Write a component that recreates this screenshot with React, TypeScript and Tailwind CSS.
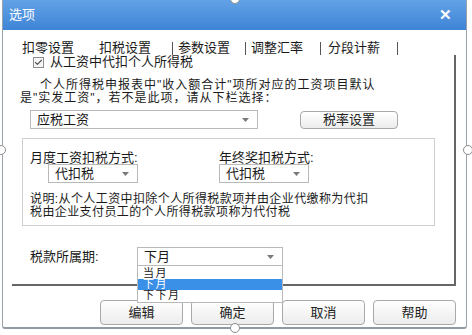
import { Check } from 'lucide-react';

const tabs = ['扣零设置', '扣税设置', '参数设置', '调整汇率', '分段计薪'];

function Arrow() {
  return (
    <svg width="7" height="4" viewBox="0 0 7 4" className="shrink-0">
      <path d="M0 0 L7 0 L3.5 4 Z" fill="#7a7a7a" />
    </svg>
  );
}

function Select({ value, className }: { value: string; className: string }) {
  return (
    <div
      className={`flex items-center justify-between border border-[#b9b9b9] bg-white pl-[6px] pr-[8px] ${className}`}
    >
      <span className="leading-[14px]">{value}</span>
      <Arrow />
    </div>
  );
}

function Button({ label, className = '' }: { label: string; className?: string }) {
  return (
    <button
      type="button"
      className={`flex items-center justify-center rounded-[4px] border border-[#a9a9a9] bg-gradient-to-b from-white to-[#ececec] text-[13px] leading-[14px] text-[#222] ${className}`}
    >
      {label}
    </button>
  );
}

function Handle({ className }: { className: string }) {
  return (
    <div className={`absolute h-[10px] w-[10px] rounded-full border border-[#8c8c8c] bg-white ${className}`} />
  );
}

export default function App() {
  return (
    <div className="relative h-[335px] w-[472px] overflow-hidden bg-white pl-[2px] font-['Liberation_Sans','Noto_Sans_CJK_SC',sans-serif] text-[13px] text-[#1a1a1a]">
      <div className="flex h-[329px] w-[465px] flex-col rounded-b-[3px] border-x border-b-2 border-x-[#9aa3ad] border-b-[#8f9aa5]">
        {/* title bar */}
        <div className="flex h-[30px] shrink-0 items-center justify-between bg-gradient-to-b from-[#62a2e6] to-[#3e84d6] pl-[6px] pr-[14px] text-white">
          <span className="leading-[14px]">选项</span>
          <span className="text-[15px] font-bold leading-[14px]">✕</span>
        </div>

        {/* tabs */}
        <div className="mt-[11px] flex h-[14px] items-center pl-[19px] leading-[14px]">
          <span>{tabs[0]}</span>
          <span className="ml-[25px]">{tabs[1]}</span>
          <span className="ml-[21px] h-[13px] w-px bg-[#555]" />
          <span className="ml-[5px]">{tabs[2]}</span>
          <span className="ml-[15px] h-[13px] w-px bg-[#555]" />
          <span className="ml-[5px]">{tabs[3]}</span>
          <span className="ml-[17px] h-[13px] w-px bg-[#555]" />
          <span className="ml-[7px]">{tabs[4]}</span>
          <span className="ml-[17px] h-[13px] w-px bg-[#555]" />
        </div>

        {/* panel */}
        <div className="relative ml-[9px] flex w-[444px] flex-col border-b-2 border-r-2 border-[#666]">
          <div className="flex h-[14px] items-center pl-[21px]">
            <div className="flex h-[11px] w-[11px] items-center justify-center border border-[#8e8e8e] bg-[#f6f6f6]">
              <Check size={9} strokeWidth={3} className="text-[#555]" />
            </div>
            <span className="ml-[6px] leading-[14px]">从工资中代扣个人所得税</span>
          </div>

          <div className="mt-[10px] text-[12px] leading-[13px] tracking-[1px]">
            <div className="pl-[28px]">个人所得税申报表中"收入额合计"项所对应的工资项目默认</div>
            <div className="pl-[8px]">是"实发工资"，若不是此项，请从下栏选择：</div>
          </div>

          <div className="mt-[5px] flex items-center pl-[18px]">
            <Select value="应税工资" className="h-[19px] w-[228px]" />
            <Button label="税率设置" className="ml-[42px] h-[18px] w-[98px]" />
          </div>

          <div className="ml-[10px] mt-[9px] flex w-[413px] flex-col border border-[#cfcfcf] pb-[6px] pl-[7px] pt-[12px]">
            <div className="flex leading-[13px]">
              <span className="w-[189px]">月度工资扣税方式:</span>
              <span>年终奖扣税方式:</span>
            </div>
            <div className="flex">
              <Select value="代扣税" className="ml-[18px] h-[19px] w-[90px]" />
              <Select value="代扣税" className="ml-[81px] h-[19px] w-[90px]" />
            </div>
            <div className="mt-[10px] text-[12px] leading-[13px] tracking-[0.4px]">
              <div>说明:从个人工资中扣除个人所得税款项并由企业代缴称为代扣</div>
              <div>税由企业支付员工的个人所得税款项称为代付税</div>
            </div>
          </div>

          <div className="mb-[18px] mt-[21px] flex items-center pl-[18px]">
            <span className="w-[107px] leading-[14px]">税款所属期:</span>
            <div className="relative">
              <Select value="下月" className="h-[19px] w-[146px]" />
              <div className="absolute left-0 top-[18px] z-10 flex w-[146px] flex-col border border-[#b9b9b9] bg-white pb-[1px] pt-[2px] text-[11px] leading-[11px] tracking-[1.5px]">
                <span className="h-[11px] pl-[5px]">当月</span>
                <span className="h-[11px] bg-[#3a8fe6] pl-[5px] text-white">下月</span>
                <span className="h-[11px] pl-[5px]">下下月</span>
              </div>
            </div>
          </div>
        </div>

        {/* buttons */}
        <div className="mt-[14px] flex justify-end gap-[8px] pr-[10px]">
          <Button label="编辑" className="h-[25px] w-[83px]" />
          <Button label="确定" className="h-[25px] w-[83px]" />
          <Button label="取消" className="h-[25px] w-[83px]" />
          <Button label="帮助" className="h-[25px] w-[83px]" />
        </div>
      </div>

      <Handle className="left-[230px] top-[-6px]" />
      <Handle className="left-[230px] top-[323px]" />
      <Handle className="left-[-4px] top-[145px]" />
      <Handle className="left-[463px] top-[145px]" />
    </div>
  );
}
